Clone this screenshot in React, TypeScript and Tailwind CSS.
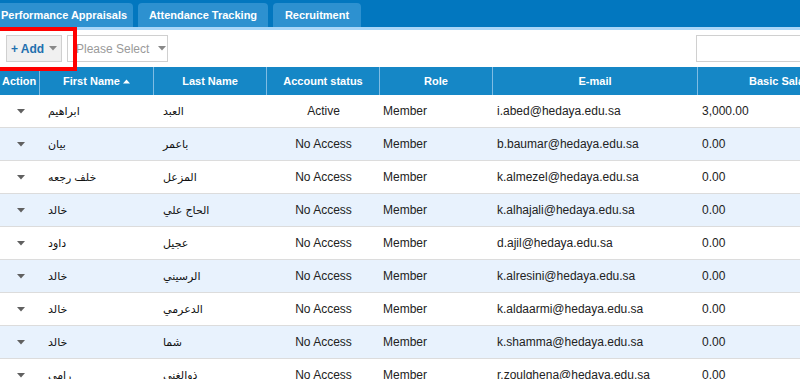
import React from "react";

const rows = [
  { f: "ابراهيم", l: "العبد", s: "Active", e: "i.abed@hedaya.edu.sa", p: "3,000.00" },
  { f: "بيان", l: "باعمر", s: "No Access", e: "b.baumar@hedaya.edu.sa", p: "0.00" },
  { f: "خلف رجعه", l: "المزعل", s: "No Access", e: "k.almezel@hedaya.edu.sa", p: "0.00" },
  { f: "خالد", l: "الحاج علي", s: "No Access", e: "k.alhajali@hedaya.edu.sa", p: "0.00" },
  { f: "داود", l: "عجيل", s: "No Access", e: "d.ajil@hedaya.edu.sa", p: "0.00" },
  { f: "خالد", l: "الرسيني", s: "No Access", e: "k.alresini@hedaya.edu.sa", p: "0.00" },
  { f: "خالد", l: "الدعرمي", s: "No Access", e: "k.aldaarmi@hedaya.edu.sa", p: "0.00" },
  { f: "خالد", l: "شما", s: "No Access", e: "k.shamma@hedaya.edu.sa", p: "0.00" },
  { f: "رامي", l: "ذوالغني", s: "No Access", e: "r.zoulghena@hedaya.edu.sa", p: "0.00" },
];

const Caret = ({ c = "#666" }: { c?: string }) => (
  <svg width="8" height="5" viewBox="0 0 8 5" className="inline-block shrink-0">
    <path d="M0 0 L8 0 L4 4.5 Z" fill={c} />
  </svg>
);

const cols = "grid grid-cols-[40px_114px_113px_113px_113px_205px_1fr]";

export default function App() {
  return (
    <div className="relative w-[800px] h-[379px] overflow-hidden bg-white" style={{ fontFamily: '"Liberation Sans", Arial, "DejaVu Sans", sans-serif' }}>
      {/* Tab bar */}
      <div className="h-[27px] bg-[#0277bf] flex items-end gap-[5px]">
        <div className="ml-[-8px] h-[24px] w-[141px] shrink-0 rounded-t-[4px] bg-[#2d91d0] flex items-center pl-[9px] text-white text-[11px] font-bold whitespace-nowrap">Performance Appraisals</div>
        <div className="h-[24px] w-[130px] shrink-0 rounded-t-[4px] bg-[#2d91d0] flex items-center justify-center text-white text-[11px] font-bold whitespace-nowrap">Attendance Tracking</div>
        <div className="h-[24px] w-[88px] shrink-0 rounded-t-[4px] bg-[#2d91d0] flex items-center justify-center text-white text-[11px] font-bold whitespace-nowrap">Recruitment</div>
      </div>
      <div className="h-[3px] bg-[#a9d6f8]" />
      {/* toolbar */}
      <div className="h-[37px] flex items-center pl-[6px] gap-[5px]">
        <div className="h-[27px] w-[56px] shrink-0 bg-[#f0f0f0] border border-[#d0d0d0] flex items-center justify-center gap-[5px] text-[12px] font-bold text-[#1f6fae] whitespace-nowrap">
          <span>+ Add</span>
          <Caret c="#888" />
        </div>
        <div className="h-[27px] w-[101px] shrink-0 bg-white border border-[#d0d0d0] flex items-center pl-[8px] gap-[9px] text-[12px] text-[#9a9a9a] whitespace-nowrap overflow-hidden">
          <span>Please Select</span>
          <Caret c="#888" />
        </div>
        <div className="flex-1" />
        <div className="h-[27px] w-[110px] shrink-0 mr-[-6px] border border-[#d0d0d0] bg-white" />
      </div>
      {/* header */}
      <div className={`${cols} h-[28px] bg-[#1587c6] text-white text-[11px] font-bold whitespace-nowrap`}>
        <div className="flex items-center pl-[2px] border-r border-[#7fbce3]">Action</div>
        <div className="flex items-center justify-center gap-[3px] border-r border-[#7fbce3]">
          First Name
          <svg width="7" height="5" viewBox="0 0 7 5"><path d="M0 4.5 L7 4.5 L3.5 0.5 Z" fill="#fff" /></svg>
        </div>
        <div className="flex items-center justify-center border-r border-[#7fbce3]">Last Name</div>
        <div className="flex items-center justify-center border-r border-[#7fbce3]">Account status</div>
        <div className="flex items-center justify-center border-r border-[#7fbce3]">Role</div>
        <div className="flex items-center justify-center border-r border-[#7fbce3]">E-mail</div>
        <div className="flex items-center pl-[51px]">Basic Salary</div>
      </div>
      {rows.map((r, i) => (
        <div key={i} className={`${cols} h-[33px] border-b border-[#dcdcdc] text-[12px] text-[#222] whitespace-nowrap ${i % 2 === 1 ? "bg-[#e8f2fd]" : "bg-white"}`}>
          <div className="flex items-center justify-center pl-[2px]"><Caret c="#606060" /></div>
          <div className="flex items-center pl-[8px] text-[11px] text-[#111]"><span dir="rtl">{r.f}</span></div>
          <div className="flex items-center pl-[9px] text-[11px] text-[#111]"><span dir="rtl">{r.l}</span></div>
          <div className="flex items-center justify-center">{r.s}</div>
          <div className="flex items-center pl-[3px]">Member</div>
          <div className="flex items-center pl-[4px]">{r.e}</div>
          <div className="flex items-center pl-[4px]">{r.p}</div>
        </div>
      ))}
      {/* red highlight */}
      <div className="absolute left-[-4px] top-[27px] w-[81px] h-[44px] border-[4px] border-[#ff0000]" />
    </div>
  );
}
